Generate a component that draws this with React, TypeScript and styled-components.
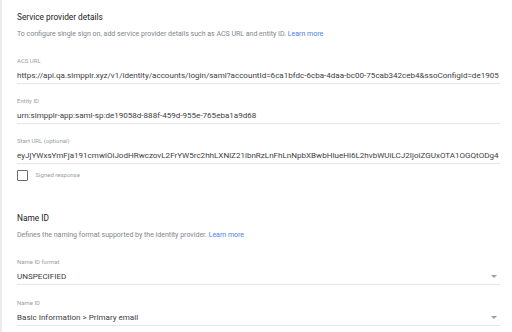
import styled, { createGlobalStyle } from 'styled-components'

const GlobalStyle = createGlobalStyle`
  html, body {
    margin: 0;
    padding: 0;
    background: #ffffff;
  }
  body {
    font-family: Roboto, "Liberation Sans", sans-serif;
    color: #202124;
  }
`

const Page = styled.div`
  width: 512px;
  height: 332px;
  overflow: hidden;
  box-sizing: border-box;
  border-left: 2px solid #ececec;
  padding: 10px 12px 0 15px;
`

const Section = styled.section<{ $top?: number }>`
  display: flex;
  flex-direction: column;
  margin-top: ${(p) => p.$top ?? 0}px;
`

const Heading = styled.h2`
  margin: 0;
  font-size: 8.3px;
  font-weight: 400;
  line-height: 14px;
  color: #202124;
`

const Description = styled.p`
  margin: 5px 0 0;
  font-size: 7px;
  line-height: 10px;
  color: #80868b;
`

const Link = styled.a`
  color: #4a7ee8;
  text-decoration: none;
`

const Field = styled.div<{ $top: number }>`
  display: flex;
  flex-direction: column;
  margin-top: ${(p) => p.$top}px;
  border-bottom: 1px solid #e6e6e6;
  position: relative;
`

const Label = styled.label`
  font-size: 6px;
  line-height: 8px;
  color: #9aa0a6;
`

const Value = styled.div`
  margin-top: 5px;
  padding-bottom: 2px;
  font-size: 8.05px;
  line-height: 11px;
  color: #3c4043;
  white-space: nowrap;
  overflow: hidden;
`

const Caret = styled.span`
  position: absolute;
  right: 3px;
  bottom: 6px;
  width: 0;
  height: 0;
  border-left: 3.5px solid transparent;
  border-right: 3.5px solid transparent;
  border-top: 3.5px solid #9e9e9e;
`

const CheckRow = styled.div`
  display: flex;
  align-items: center;
  gap: 8px;
  margin-top: 6px;
`

const Box = styled.span`
  box-sizing: border-box;
  width: 10.5px;
  height: 10.5px;
  border: 1.5px solid #6b6b6b;
  border-radius: 1px;
`

const CheckLabel = styled.span`
  font-size: 6px;
  line-height: 8px;
  color: #9aa0a6;
`

const fields = [
  {
    label: 'ACS URL',
    value:
      'https://api.qa.simpplr.xyz/v1/identity/accounts/login/saml?accountId=6ca1bfdc-6cba-4daa-bc00-75cab342ceb4&ssoConfigId=de1905',
  },
  { label: 'Entity ID', value: 'urn:simpplr-app:saml-sp:de19058d-888f-459d-955e-765eba1a9d68' },
  {
    label: 'Start URL (optional)',
    value:
      'eyJjYWxsYmFja191cmwiOiJodHRwczovL2FrYW5rc2hhLXNlZ21lbnRzLnFhLnNpbXBwbHIueHl6L2hvbWUiLCJ2IjoiZGUxOTA1OGQtODg4',
  },
]

const App = () => {
  return (
    <>
      <GlobalStyle />
      <Page>
        <Section>
          <Heading>Service provider details</Heading>
          <Description>
            To configure single sign on, add service provider details such as ACS URL and entity ID.{' '}
            <Link href="#">Learn more</Link>
          </Description>
          {fields.map((f, i) => (
            <Field key={f.label} $top={i === 0 ? 18 : 13}>
              <Label>{f.label}</Label>
              <Value>{f.value}</Value>
            </Field>
          ))}
          <CheckRow>
            <Box />
            <CheckLabel>Signed response</CheckLabel>
          </CheckRow>
        </Section>
        <Section $top={30}>
          <Heading>Name ID</Heading>
          <Description>
            Defines the naming format supported by the identity provider. <Link href="#">Learn more</Link>
          </Description>
          <Field $top={18}>
            <Label>Name ID format</Label>
            <Value>UNSPECIFIED</Value>
            <Caret />
          </Field>
          <Field $top={14}>
            <Label>Name ID</Label>
            <Value>Basic Information &gt; Primary email</Value>
            <Caret />
          </Field>
        </Section>
      </Page>
    </>
  )
}

export default App
